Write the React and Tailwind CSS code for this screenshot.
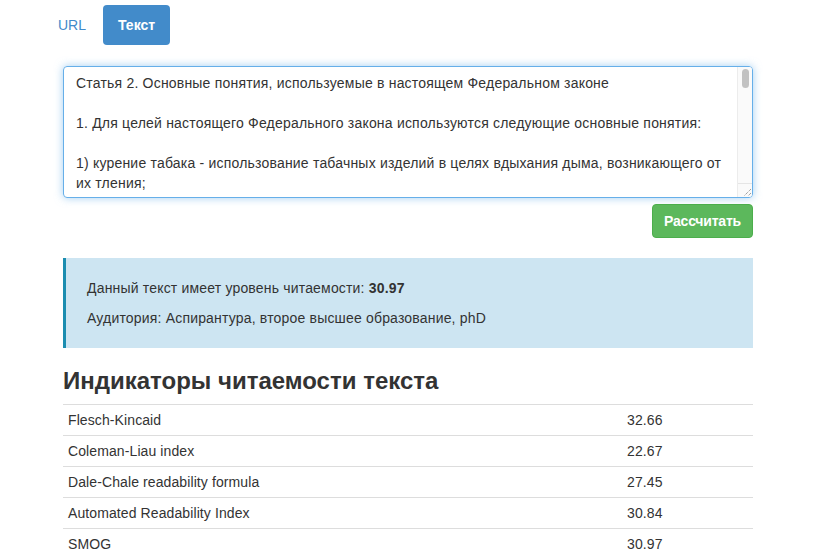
import React from 'react';

const rows = [
  ['Flesch-Kincaid', '32.66'],
  ['Coleman-Liau index', '22.67'],
  ['Dale-Chale readability formula', '27.45'],
  ['Automated Readability Index', '30.84'],
  ['SMOG', '30.97'],
];

const lines = [
  'Статья 2. Основные понятия, используемые в настоящем Федеральном законе',
  '',
  '1. Для целей настоящего Федерального закона используются следующие основные понятия:',
  '',
  '1) курение табака - использование табачных изделий в целях вдыхания дыма, возникающего от',
  'их тления;',
];

export default function App() {
  return (
    <div className="min-h-[553px] bg-white text-[14px] leading-[20px] text-[#333]" style={{ fontFamily: '"Liberation Sans", Arial, sans-serif' }}>
      <div className="pt-[5px] ml-[43px] flex gap-[2px]">
        <a className="px-[15px] py-[10px] rounded-[4px] text-[#428bca]">URL</a>
        <a className="px-[15px] py-[10px] rounded-[4px] bg-[#428bca] text-white font-bold">Текст</a>
      </div>

      <div className="ml-[63px] w-[690px]">
        <div className="mt-[21px] h-[132px] flex border border-[#66afe9] rounded-[4px] shadow-[0_0_8px_rgba(102,175,233,0.6)] overflow-hidden">
          <div className="flex-1 pl-[12px] pt-[6px] overflow-hidden tracking-[0.2px]">
            {lines.map((l, i) => (
              <div key={i} className="whitespace-nowrap h-[20px]">{l}</div>
            ))}
          </div>
          <div className="w-[15px] flex flex-col border-l border-[#ececec] bg-[#fafafa]">
            <div className="flex-1 pt-[2px] flex justify-center">
              <div className="w-[7px] h-[19px] rounded-full bg-[#c2c2c2]" />
            </div>
            <div className="h-[14px] border-t border-[#e5e5e5] flex items-end justify-end">
              <svg width="12" height="12" viewBox="0 0 12 12">
                <path d="M11 4 L4 11 M11 8 L8 11" stroke="#777" strokeWidth="1" strokeDasharray="1 1" />
              </svg>
            </div>
          </div>
        </div>

        <div className="mt-[6px] flex justify-end">
          <button className="h-[34px] px-[11px] rounded-[4px] bg-[#5cb85c] border border-[#4cae4c] text-white font-bold tracking-[-0.2px]">
            Рассчитать
          </button>
        </div>

        <div className="mt-[20px] bg-[#cde5f2] border-l-[3px] border-[#1b8db0] pl-[21px] pr-[15px] py-[20px] tracking-[0.18px]">
          <p className="mb-[10px]">Данный текст имеет уровень читаемости: <b>30.97</b></p>
          <p>Аудитория: Аспирантура, второе высшее образование, phD</p>
        </div>

        <h3 className="mt-[20px] mb-[10px] text-[24px] leading-[26px] font-bold text-[#333]">
          Индикаторы читаемости текста
        </h3>

        <table className="w-full border-collapse tracking-[0.1px]">
          <tbody>
            {rows.map(([name, val]) => (
              <tr key={name} className="border-t border-[#ddd]">
                <td className="p-[5px] w-[559px]">{name}</td>
                <td className="p-[5px]">{val}</td>
              </tr>
            ))}
          </tbody>
        </table>
      </div>
    </div>
  );
}
